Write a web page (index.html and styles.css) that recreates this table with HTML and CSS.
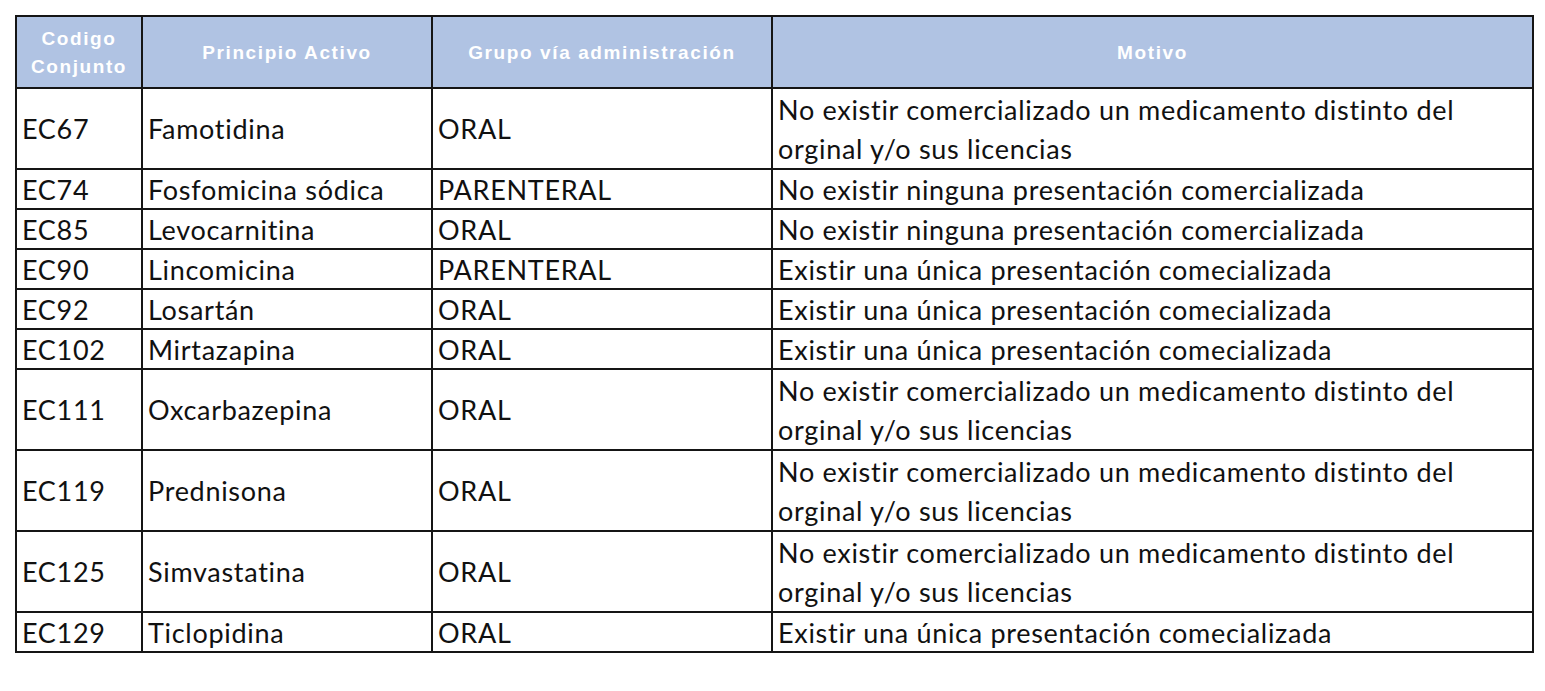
FILE: index.html
```html
<!DOCTYPE html>
<html lang="es">
<head>
<meta charset="utf-8">
<title>Tabla</title>
<link rel="stylesheet" href="styles.css">
</head>
<body>
<table class="grid">
  <colgroup>
    <col class="c1"><col class="c2"><col class="c3"><col class="c4">
  </colgroup>
  <thead>
    <tr class="head">
      <th>Codigo<br>Conjunto</th>
      <th>Principio Activo</th>
      <th>Grupo vía administración</th>
      <th>Motivo</th>
    </tr>
  </thead>
  <tbody>
    <tr class="two"><td>EC67</td><td>Famotidina</td><td>ORAL</td><td>No existir comercializado un medicamento distinto del<br>orginal y/o sus licencias</td></tr>
    <tr><td>EC74</td><td>Fosfomicina sódica</td><td>PARENTERAL</td><td>No existir ninguna presentación comercializada</td></tr>
    <tr><td>EC85</td><td>Levocarnitina</td><td>ORAL</td><td>No existir ninguna presentación comercializada</td></tr>
    <tr><td>EC90</td><td>Lincomicina</td><td>PARENTERAL</td><td>Existir una única presentación comecializada</td></tr>
    <tr><td>EC92</td><td>Losartán</td><td>ORAL</td><td>Existir una única presentación comecializada</td></tr>
    <tr><td>EC102</td><td>Mirtazapina</td><td>ORAL</td><td>Existir una única presentación comecializada</td></tr>
    <tr class="two"><td>EC111</td><td>Oxcarbazepina</td><td>ORAL</td><td>No existir comercializado un medicamento distinto del<br>orginal y/o sus licencias</td></tr>
    <tr class="two"><td>EC119</td><td>Prednisona</td><td>ORAL</td><td>No existir comercializado un medicamento distinto del<br>orginal y/o sus licencias</td></tr>
    <tr class="two"><td>EC125</td><td>Simvastatina</td><td>ORAL</td><td>No existir comercializado un medicamento distinto del<br>orginal y/o sus licencias</td></tr>
    <tr><td>EC129</td><td>Ticlopidina</td><td>ORAL</td><td>Existir una única presentación comecializada</td></tr>
  </tbody>
</table>
</body>
</html>
```
FILE: styles.css
```css
html, body {
  margin: 0;
  padding: 0;
  background: #ffffff;
}
body {
  padding: 15px 0 0 15px;
}
.grid {
  border-collapse: collapse;
  table-layout: fixed;
  width: 1517px;
  border: 2px solid #151515;
}
.c1 { width: 126px; }
.c2 { width: 290px; }
.c3 { width: 340px; }
.c4 { width: 761px; }
.grid th, .grid td {
  border: 2px solid #151515;
}
.grid th {
  background: #b0c3e3;
  color: #ffffff;
  font-family: "Liberation Sans", Arial, sans-serif;
  font-weight: bold;
  font-size: 19px;
  letter-spacing: 1.6px;
  line-height: 28px;
  height: 68px;
  padding: 2px 2px 0;
  text-align: center;
  vertical-align: middle;
}
.grid td {
  font-family: "Lato", sans-serif;
  font-size: 27px;
  letter-spacing: 0.7px;
  color: #111111;
  line-height: 36px;
  padding: 2px 5px 0;
  text-align: left;
  vertical-align: middle;
  white-space: nowrap;
}
.grid tr.two td {
  line-height: 38.5px;
}
```
